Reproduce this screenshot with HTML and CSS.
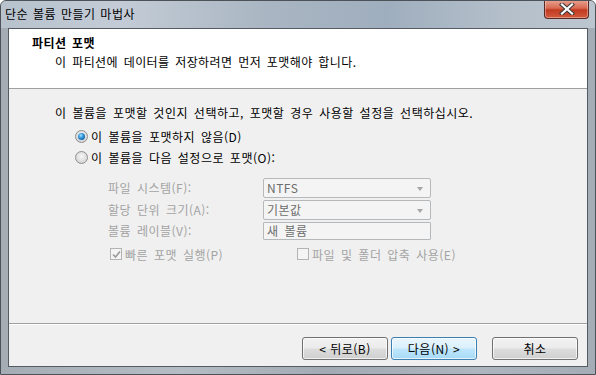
FILE: index.html
```html
<!DOCTYPE html>
<html lang="ko">
<head>
  <meta charset="UTF-8">
  <title>단순 볼륨 만들기 마법사</title>
  <link rel="stylesheet" href="styles.css">
</head>
<body>

<div class="window">
  <div class="titlebar">
    <span class="title">단순 볼륨 만들기 마법사</span>
    <div class="close-btn">
      <svg width="16" height="12" viewBox="0 0 16 12">
        <path d="M3 1.5 L13 10.5 M13 1.5 L3 10.5" stroke="#3a3a3a" stroke-width="4.2" stroke-linecap="square"/>
        <path d="M3 1.5 L13 10.5 M13 1.5 L3 10.5" stroke="#ffffff" stroke-width="2.2" stroke-linecap="square"/>
      </svg>
    </div>
  </div>

  <div class="client">
    <div class="header">
      <div class="header-title">파티션 포맷</div>
      <div class="header-sub">이 파티션에 데이터를 저장하려면 먼저 포맷해야 합니다.</div>
    </div>

    <div class="content">
      <div class="question">이 볼륨을 포맷할 것인지 선택하고, 포맷할 경우 사용할 설정을 선택하십시오.</div>

      <div class="radio-row">
        <span class="radio checked"></span>
        <span>이 볼륨을 포맷하지 않음(D)</span>
      </div>
      <div class="radio-row">
        <span class="radio"></span>
        <span>이 볼륨을 다음 설정으로 포맷(O):</span>
      </div>

      <div class="fields">
        <div class="field-row">
          <span class="field-label">파일 시스템(F):</span>
          <div class="combo">NTFS<span class="arrow"></span></div>
        </div>
        <div class="field-row">
          <span class="field-label">할당 단위 크기(A):</span>
          <div class="combo">기본값<span class="arrow"></span></div>
        </div>
        <div class="field-row">
          <span class="field-label">볼륨 레이블(V):</span>
          <div class="textbox">새 볼륨</div>
        </div>
      </div>

      <div class="check-row">
        <div class="check-item quick">
          <span class="checkbox checked">
            <svg width="9" height="9" viewBox="0 0 9 9"><path d="M1 4.5 L3.5 7 L8 1.5" stroke="#9a9a9a" stroke-width="1.6" fill="none"/></svg>
          </span>
          <span>빠른 포맷 실행(P)</span>
        </div>
        <div class="check-item">
          <span class="checkbox"></span>
          <span>파일 및 폴더 압축 사용(E)</span>
        </div>
      </div>
    </div>

    <div class="footer">
      <button class="btn">&lt; 뒤로(B)</button>
      <button class="btn default">다음(N) &gt;</button>
      <button class="btn cancel">취소</button>
    </div>
  </div>
</div>

</body>
</html>
```

FILE: styles.css
```css
* {
  margin: 0; padding: 0; box-sizing: border-box;
}
body {
  font-family: "Noto Sans CJK KR", "Noto Sans", sans-serif;
  font-size: 12px;
  background: #ffffff;
  color: #000;
}

.window {
  width: 596px;
  height: 375px;
  padding: 0 7px 7px 7px;
  display: flex;
  flex-direction: column;
  border: 1px solid #4c5258;
  border-radius: 6px 6px 0 0;
  background: linear-gradient(90deg, #a4acb4 0%, #b4bcc4 30%, #a2aab3 55%, #adb5be 80%, #a4acb5 100%);
  overflow: hidden;
}

.titlebar {
  height: 27px;
  display: flex;
  align-items: flex-start;
  justify-content: space-between;
  margin: 0 -7px;
  padding-left: 4px;
  background: linear-gradient(90deg, #b7c2cd 0%, #c3ccd6 20%, #a9b5c2 45%, #9faebe 65%, #b4bfca 85%, #bcc6d0 100%);
}
.title {
  line-height: 16px;
  margin-top: 5px;
  letter-spacing: 0.5px;
  word-spacing: 1px;
  color: #000;
}

.close-btn {
  width: 45px;
  height: 19px;
  margin-right: 6px;
  margin-top: -1px;
  border: 1px solid #5a2a22;
  border-top: none;
  border-radius: 0 0 4px 4px;
  background: linear-gradient(#e8a493 0%, #d96a52 45%, #c13a20 55%, #d25a3e 100%);
  display: flex;
  align-items: center;
  justify-content: center;
  box-shadow: inset 0 0 0 1px rgba(255, 255, 255, 0.35);
}

.client {
  flex: 1;
  border: 1px solid #555b61;
  background: #f0f0f0;
  display: flex;
  flex-direction: column;
}

.header {
  height: 60px;
  background: #ffffff;
  border-bottom: 1px solid #a0a0a0;
  padding: 6px 0 0 23px;
  letter-spacing: 0.4px;
  word-spacing: 2px;
}
.header-title {
  font-weight: bold;
  line-height: 16px;
}
.header-sub {
  line-height: 16px;
  margin-top: 3px;
  padding-left: 23px;
}

.content {
  flex: 1;
  padding: 16px 0 0 46px;
  letter-spacing: 0.5px;
  word-spacing: 2px;
  border-bottom: 1px solid #a0a0a0;
}
.question {
  line-height: 16px;
}

.radio-row {
  height: 21px;
  display: flex;
  align-items: center;
  gap: 3px;
  padding-left: 20px;
}
.question + .radio-row {
  margin-top: 5px;
}
.radio {
  width: 13px;
  height: 13px;
  border-radius: 50%;
  border: 1px solid #8e8f8f;
  background: radial-gradient(circle at 50% 40%, #f6f6f6 0%, #dcdcdc 60%, #c9c9c9 100%);
  position: relative;
}
.radio.checked::after {
  content: "";
  position: absolute;
  left: 2px; top: 2px;
  width: 7px; height: 7px;
  border-radius: 50%;
  background: radial-gradient(circle at 40% 35%, #9fe0ff 0%, #2a8cd0 45%, #0b4b8a 100%);
}

.fields {
  margin-top: 10px;
  padding-left: 53px;
  display: flex;
  flex-direction: column;
  gap: 2px;
}
.field-row {
  display: flex;
  align-items: center;
}
.field-label {
  width: 155px;
  color: #a3a3a3;
  line-height: 16px;
}
.combo, .textbox {
  width: 168px;
  height: 20px;
  border: 1px solid #b5b9bc;
  border-radius: 2px;
  background: #f4f4f4;
  color: #6d6d6d;
  line-height: 17px;
  padding-left: 3px;
  position: relative;
}
.textbox {
  height: 18px;
  line-height: 15px;
  border-radius: 1px;
}
.arrow {
  position: absolute;
  right: 7px;
  top: 8px;
  border-left: 3.5px solid transparent;
  border-right: 3.5px solid transparent;
  border-top: 4px solid #a6a6a6;
}

.check-row {
  margin-top: 5px;
  height: 18px;
  padding-left: 55px;
  display: flex;
  align-items: center;
  color: #a3a3a3;
}
.check-item {
  display: flex;
  align-items: center;
  gap: 3px;
}
.check-item.quick {
  width: 187px;
}
.checkbox {
  width: 12px;
  height: 12px;
  border: 1px solid #b4b4b4;
  background: #f4f4f4;
  display: flex;
  align-items: center;
  justify-content: center;
}

.footer {
  height: 42px;
  border-top: 1px solid #ffffff;
  display: flex;
  align-items: flex-start;
  padding: 12px 0 0 293px;
}
.btn {
  font-family: inherit;
  font-size: 12px;
  letter-spacing: 0.5px;
  width: 86px;
  height: 23px;
  border: 1px solid #707070;
  border-radius: 3px;
  background: linear-gradient(#f2f2f2 0%, #ebebeb 48%, #dddddd 52%, #cfcfcf 100%);
  box-shadow: inset 0 0 0 1px rgba(255, 255, 255, 0.7);
  color: #000;
  margin-right: 3px;
}
.btn.default {
  border-color: #3c7fb1;
  background: linear-gradient(#eaf6fd 0%, #d9f0fc 48%, #bee6fd 52%, #a7d9f5 100%);
}
.btn.cancel {
  margin-left: 12px;
}
```
